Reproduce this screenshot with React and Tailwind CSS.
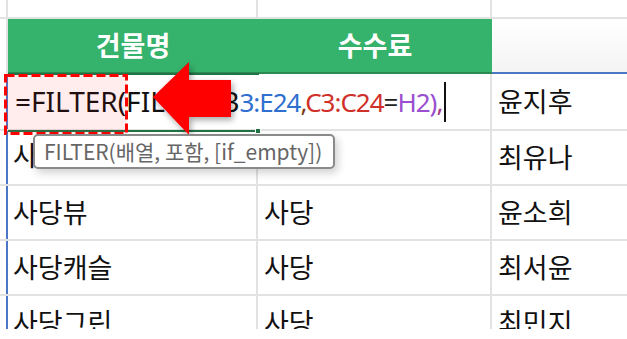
import React from 'react';

const kr = { fontFamily: '"Noto Sans CJK KR", "Noto Sans", sans-serif' };
const latin = { fontFamily: '"Noto Sans", "Noto Sans CJK KR", sans-serif' };

const rows = [
  { a: '사당역', b: '', c: '최유나', up: true },
  { a: '사당뷰', b: '사당', c: '윤소희' },
  { a: '사당캐슬', b: '사당', c: '최서윤' },
  { a: '사당그린', b: '사당', c: '최민지' },
];

const Row = ({ a, b, c, up }) => (
  <div className="flex h-[55px] border-b-2 border-[#e2e2e2]">
    <div className="w-[8px] shrink-0 border-r-2 border-[#4a78c4]" />
    <div className={`w-[250px] shrink-0 border-r-2 border-[#e2e2e2] flex pl-[5px] text-[27px] text-[#111] ${up ? 'items-start pt-[4px]' : 'items-center'}`}>{a}</div>
    <div className="w-[234px] shrink-0 border-r-2 border-[#e2e2e2] flex items-center pl-[6px] text-[27px] text-[#111]">{b}</div>
    <div className="flex-1 flex items-center pl-[6px] text-[27px] text-[#111]">{c}</div>
  </div>
);

export default function App() {
  return (
    <div className="w-[627px] h-[339px] bg-white">
      <div className="relative h-[329px] overflow-hidden" style={kr}>
        {/* 맨 윗줄 */}
        <div className="flex h-[19px] border-b-2 border-[#e2e2e2]">
          <div className="w-[8px] shrink-0 border-r-2 border-[#e2e2e2]" />
          <div className="w-[250px] shrink-0 border-r-2 border-[#e2e2e2]" />
          <div className="w-[234px] shrink-0 border-r-2 border-[#e2e2e2]" />
          <div className="flex-1" />
        </div>

        {/* 헤더 */}
        <div className="flex h-[55px]">
          <div className="w-[8px] shrink-0 border-r-2 border-[#e2e2e2]" />
          <div className="w-[484px] shrink-0 flex bg-[#35b26b] border-b-2 border-[#2a8a52]">
            <div className="w-[250px] flex items-center justify-center text-white font-bold text-[27px]">건물명</div>
            <div className="flex-1 flex items-center justify-center text-white font-bold text-[27px]">수수료</div>
          </div>
          <div className="flex-1 border-b-2 border-[#4a78c4] bg-gradient-to-b from-white to-[#f4f4f4]" />
        </div>

        {/* 수식 입력 행 */}
        <div className="flex h-[57px] border-b-2 border-[#e2e2e2]">
          <div className="w-[8px] shrink-0 border-r-2 border-[#4a78c4]" />
          <div className="w-[484px] shrink-0 border-r-2 border-[#e2e2e2] flex items-center pl-[7px]">
            <div className="text-[28px] leading-[40px] whitespace-nowrap" style={latin}>
              <span className="text-[#111]">=FILTER(FILTER(B</span>
              <span className="text-[26px] tracking-[-1px]">
                <span className="text-[#2f6fd0]">3:E24</span>
                <span className="text-[#7a3b1a]">,</span>
                <span className="text-[#d0302a]">C3:C24</span>
                <span className="text-[#222]">=</span>
                <span className="text-[#9a4fd0]">H2)</span>
                <span className="text-[#a63a8a]">,</span>
              </span>
              <span className="inline-block w-[2px] h-[40px] bg-[#111] ml-[2px] align-[-10px]" />
            </div>
          </div>
          <div className="flex-1 flex items-center pl-[6px] text-[27px] text-[#111]">윤지후</div>
        </div>

        {rows.map((r) => (
          <Row key={r.c} {...r} />
        ))}

        {/* 활성 셀 테두리 */}
        <div className="absolute left-[8px] top-[73px] w-[251px] h-[59px] border-y-2 border-[#217346] pointer-events-none" />
        <div className="absolute left-[255px] top-[128px] w-[6px] h-[6px] bg-[#217346] border border-white" />

        {/* 빨간 점선 박스 */}
        <svg className="absolute left-[2px] top-[72px]" width="128" height="65" viewBox="0 0 128 65">
          <rect x="3.5" y="3.5" width="121" height="58" fill="#ff0000" fillOpacity="0.07" stroke="#ff0000" strokeWidth="3" strokeDasharray="9 4" />
        </svg>

        {/* 화살표 */}
        <svg className="absolute left-[140px] top-[52px]" width="110" height="100" viewBox="0 0 110 100">
          <defs>
            <filter id="sh" x="-30%" y="-30%" width="160%" height="160%">
              <feGaussianBlur in="SourceAlpha" stdDeviation="3" />
              <feOffset dx="2" dy="3" />
              <feComponentTransfer>
                <feFuncA type="linear" slope="0.35" />
              </feComponentTransfer>
              <feMerge>
                <feMergeNode />
                <feMergeNode in="SourceGraphic" />
              </feMerge>
            </filter>
          </defs>
          <polygon points="13,45 49,10 49,28 91,28 91,65 49,65 49,83" fill="#ff0000" filter="url(#sh)" />
        </svg>

        {/* 툴팁 */}
        <div className="absolute left-[33px] top-[134px] w-[302px] h-[35px] rounded-[5px] border-2 border-[#8a8a8a] bg-white flex items-center pl-[9px] text-[21px] text-[#666] whitespace-nowrap shadow-[3px_4px_8px_rgba(0,0,0,0.18)]">
          FILTER(배열, 포함, [if_empty])
        </div>
      </div>
    </div>
  );
}
